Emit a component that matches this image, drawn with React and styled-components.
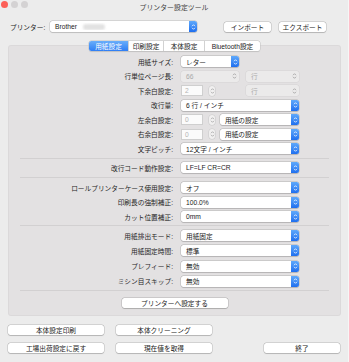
import React from "react";
import styled, { createGlobalStyle } from "styled-components";

const GlobalStyle = createGlobalStyle`
  html, body {
    margin: 0;
    padding: 0;
    background: #ececec;
  }
  body {
    font-family: "Liberation Sans", "Noto Sans CJK JP", sans-serif;
    font-size: 6.7px;
    color: #1f1f1f;
  }
`;

const Chevrons = ({ color }) => (
  <svg width="5" height="8" viewBox="0 0 5 8">
    <path d="M1 3.2 L2.5 1.7 L4 3.2" fill="none" stroke={color} strokeWidth="0.8" />
    <path d="M1 4.8 L2.5 6.3 L4 4.8" fill="none" stroke={color} strokeWidth="0.8" />
  </svg>
);

const Popup = ({ width, disabled, children }) => (
  <StyledPopup $width={width} $disabled={disabled}>
    <StyledPopupText>{children}</StyledPopupText>
    {disabled ? (
      <StyledGreyArrow>
        <Chevrons color="#9a9a9a" />
      </StyledGreyArrow>
    ) : (
      <StyledBlueArrow>
        <Chevrons color="#ffffff" />
      </StyledBlueArrow>
    )}
  </StyledPopup>
);

const Stepper = () => (
  <StyledStepper>
    <Chevrons color="#a0a0a0" />
  </StyledStepper>
);

const Row = ({ label, children }) => (
  <StyledRow>
    <StyledLabel>{label}</StyledLabel>
    <StyledControls>{children}</StyledControls>
  </StyledRow>
);

const App = () => {
  const tabs = [
    { name: "用紙設定", w: 39 },
    { name: "印刷設定", w: 35 },
    { name: "本体設定", w: 41 },
    { name: "Bluetooth設定", w: 56 },
  ];

  return (
    <>
      <GlobalStyle />
      <StyledWindow>
        <StyledTitleBar>
          <StyledLights>
            <StyledLight $color="#fc5f57" />
            <StyledLight $color="#d4d2d3" />
            <StyledLight $color="#d4d2d3" />
          </StyledLights>
          <StyledTitle>プリンター設定ツール</StyledTitle>
        </StyledTitleBar>

        <StyledPrinterRow>
          <StyledPrinterLabel>プリンター:</StyledPrinterLabel>
          <Popup width={147}>
            Brother <StyledRedacted />
          </Popup>
          <StyledTopButtons>
            <StyledButton $width={47}>インポート</StyledButton>
            <StyledButton $width={47}>エクスポート</StyledButton>
          </StyledTopButtons>
        </StyledPrinterRow>

        <StyledPanel>
          <StyledTabs>
            {tabs.map((t, i) => (
              <StyledTab key={t.name} $width={t.w} $active={i === 0}>
                {t.name}
              </StyledTab>
            ))}
          </StyledTabs>

          <StyledGroup $top={5} $gap={3.5}>
            <Row label="用紙サイズ:">
              <Popup width={58}>レター</Popup>
            </Row>
            <Row label="行単位ページ長:">
              <Popup width={58} disabled>66</Popup>
              <StyledPush />
              <Popup width={53} disabled>行</Popup>
            </Row>
            <Row label="下余白設定:">
              <StyledField>2</StyledField>
              <Stepper />
              <StyledPush />
              <Popup width={53} disabled>行</Popup>
            </Row>
            <Row label="改行量:">
              <Popup width={118}>6 行 / インチ</Popup>
            </Row>
            <Row label="左余白設定:">
              <StyledField>0</StyledField>
              <Stepper />
              <StyledPush />
              <Popup width={79}>用紙の設定</Popup>
            </Row>
            <Row label="右余白設定:">
              <StyledField>0</StyledField>
              <Stepper />
              <StyledPush />
              <Popup width={79}>用紙の設定</Popup>
            </Row>
            <Row label="文字ピッチ:">
              <Popup width={118}>12文字 / インチ</Popup>
            </Row>
          </StyledGroup>

          <StyledDivider $top={4} />

          <StyledGroup $top={3} $gap={3.5}>
            <Row label="改行コード動作設定:">
              <Popup width={118}>LF=LF CR=CR</Popup>
            </Row>
          </StyledGroup>

          <StyledDivider $top={4} />

          <StyledGroup $top={4} $gap={3.5}>
            <Row label="ロールプリンターケース使用設定:">
              <Popup width={118}>オフ</Popup>
            </Row>
            <Row label="印刷長の強制補正:">
              <Popup width={118}>100.0%</Popup>
            </Row>
            <Row label="カット位置補正:">
              <Popup width={118}>0mm</Popup>
            </Row>
          </StyledGroup>

          <StyledDivider $top={3} />

          <StyledGroup $top={4} $gap={4.3}>
            <Row label="用紙排出モード:">
              <Popup width={118}>用紙固定</Popup>
            </Row>
            <Row label="用紙固定時間:">
              <Popup width={118}>標準</Popup>
            </Row>
            <Row label="プレフィード:">
              <Popup width={118}>無効</Popup>
            </Row>
            <Row label="ミシン目スキップ:">
              <Popup width={118}>無効</Popup>
            </Row>
          </StyledGroup>

          <StyledDivider $top={3} />

          <StyledApplyWrap>
            <StyledButton $width={106}>プリンターへ設定する</StyledButton>
          </StyledApplyWrap>
        </StyledPanel>

        <StyledBottomGrid>
          <StyledButton $width={96}>本体設定印刷</StyledButton>
          <StyledButton $width={96}>本体クリーニング</StyledButton>
          <span />
          <StyledButton $width={96}>工場出荷設定に戻す</StyledButton>
          <StyledButton $width={96}>現在値を取得</StyledButton>
          <StyledEndButton $width={76}>終了</StyledEndButton>
        </StyledBottomGrid>
      </StyledWindow>
    </>
  );
};

export default App;

const StyledWindow = styled.div`
  width: 349px;
  height: 362px;
  background: #ececec;
  overflow: hidden;
  border-right: 1px solid #f6f6f6;
  box-sizing: border-box;
`;

const StyledTitleBar = styled.div`
  position: relative;
  height: 12px;
  display: flex;
  align-items: center;
  justify-content: center;
`;

const StyledLights = styled.div`
  position: absolute;
  left: 1px;
  top: 1px;
  display: flex;
  gap: 3px;
`;

const StyledLight = styled.span`
  width: 7px;
  height: 7px;
  border-radius: 50%;
  background: ${(p) => p.$color};
`;

const StyledTitle = styled.div`
  font-size: 6.9px;
  color: #404040;
  margin-top: 1px;
`;

const StyledPrinterRow = styled.div`
  display: flex;
  align-items: center;
  margin-top: 9px;
  padding-left: 10px;
  height: 11px;
`;

const StyledPrinterLabel = styled.div`
  width: 40px;
  color: #1a1a1a;
`;

const StyledTopButtons = styled.div`
  display: flex;
  gap: 8px;
  margin-left: 27px;
`;

const StyledRedacted = styled.span`
  display: inline-block;
  width: 22px;
  height: 6px;
  margin-left: 4px;
  vertical-align: middle;
  background: #e2e2e2;
  border-radius: 3px;
  filter: blur(1px);
`;

const StyledPanel = styled.div`
  margin: 13px 8px 0;
  width: 333px;
  height: 271px;
  box-sizing: border-box;
  background: #e3e1e2;
  border-radius: 3px;
  box-shadow: inset 0 0 0 1px rgba(0, 0, 0, 0.03);
  display: flex;
  flex-direction: column;
`;

const StyledTabs = styled.div`
  align-self: center;
  margin-top: -4px;
  display: flex;
  height: 10px;
  background: #fff;
  border-radius: 2.5px;
  box-shadow: 0 0 0 0.5px #c4c4c4, 0 0.5px 1px rgba(0, 0, 0, 0.15);
  overflow: hidden;
`;

const StyledTab = styled.div`
  width: ${(p) => p.$width}px;
  display: flex;
  align-items: center;
  justify-content: center;
  color: ${(p) => (p.$active ? "#fff" : "#1a1a1a")};
  background: ${(p) =>
    p.$active ? "linear-gradient(#69aefa, #2f7ef4)" : "transparent"};
  border-left: 1px solid ${(p) => (p.$active ? "transparent" : "#d2d2d2")};
  box-sizing: border-box;

  &:first-child {
    border-left: none;
  }
`;

const StyledGroup = styled.div`
  margin-top: ${(p) => p.$top}px;
  display: flex;
  flex-direction: column;
  gap: ${(p) => p.$gap}px;
`;

const StyledRow = styled.div`
  display: grid;
  grid-template-columns: 165px 118px;
  column-gap: 8px;
  align-items: center;
  height: 11px;
`;

const StyledLabel = styled.div`
  text-align: right;
  color: #262626;
  white-space: nowrap;
`;

const StyledControls = styled.div`
  display: flex;
  align-items: center;
  height: 11px;
`;

const StyledPush = styled.div`
  flex: 1;
`;

const StyledPopup = styled.div`
  width: ${(p) => p.$width}px;
  height: 11px;
  box-sizing: border-box;
  display: flex;
  align-items: center;
  border-radius: 2.5px;
  background: ${(p) => (p.$disabled ? "#ebeaea" : "#fff")};
  color: ${(p) => (p.$disabled ? "#a9a9a9" : "#1a1a1a")};
  box-shadow: ${(p) =>
    p.$disabled
      ? "0 0 0 0.5px rgba(0, 0, 0, 0.06)"
      : "0 0 0 0.5px rgba(0, 0, 0, 0.18), 0 0.5px 1px rgba(0, 0, 0, 0.12)"};
  overflow: hidden;
  flex-shrink: 0;
`;

const StyledPopupText = styled.span`
  flex: 1;
  padding-left: 5px;
  white-space: nowrap;
  overflow: hidden;
`;

const StyledBlueArrow = styled.span`
  width: 8px;
  height: 100%;
  display: flex;
  align-items: center;
  justify-content: center;
  background: linear-gradient(#5fa9fb, #1f6fef);
`;

const StyledGreyArrow = styled.span`
  width: 10px;
  height: 100%;
  display: flex;
  align-items: center;
  justify-content: center;
`;

const StyledField = styled.div`
  width: 22px;
  height: 11px;
  box-sizing: border-box;
  background: #fbfbfb;
  border: 0.5px solid #cfcfcf;
  color: #b4b4b4;
  padding-left: 3px;
  display: flex;
  align-items: center;
  flex-shrink: 0;
`;

const StyledStepper = styled.div`
  width: 6px;
  height: 10px;
  margin-left: 6px;
  box-sizing: border-box;
  border-radius: 3px;
  background: #f1f0f0;
  box-shadow: 0 0 0 0.5px #c8c8c8;
  display: flex;
  align-items: center;
  justify-content: center;

  svg {
    width: 5px;
  }
`;

const StyledDivider = styled.div`
  margin: ${(p) => p.$top}px 12px 0;
  height: 1px;
  background: #d2d0d1;
`;

const StyledApplyWrap = styled.div`
  margin-top: 7px;
  display: flex;
  justify-content: center;
`;

const StyledButton = styled.div`
  width: ${(p) => p.$width}px;
  height: 10px;
  box-sizing: border-box;
  display: flex;
  align-items: center;
  justify-content: center;
  background: #fff;
  color: #1a1a1a;
  border-radius: 2.5px;
  box-shadow: 0 0 0 0.5px rgba(0, 0, 0, 0.2), 0 0.5px 1px rgba(0, 0, 0, 0.15);
  white-space: nowrap;
`;

const StyledEndButton = styled(StyledButton)`
  justify-self: end;
`;

const StyledBottomGrid = styled.div`
  margin-top: 9px;
  padding: 0 8px;
  display: grid;
  grid-template-columns: 96px 96px 1fr;
  column-gap: 12px;
  row-gap: 8px;
`;
